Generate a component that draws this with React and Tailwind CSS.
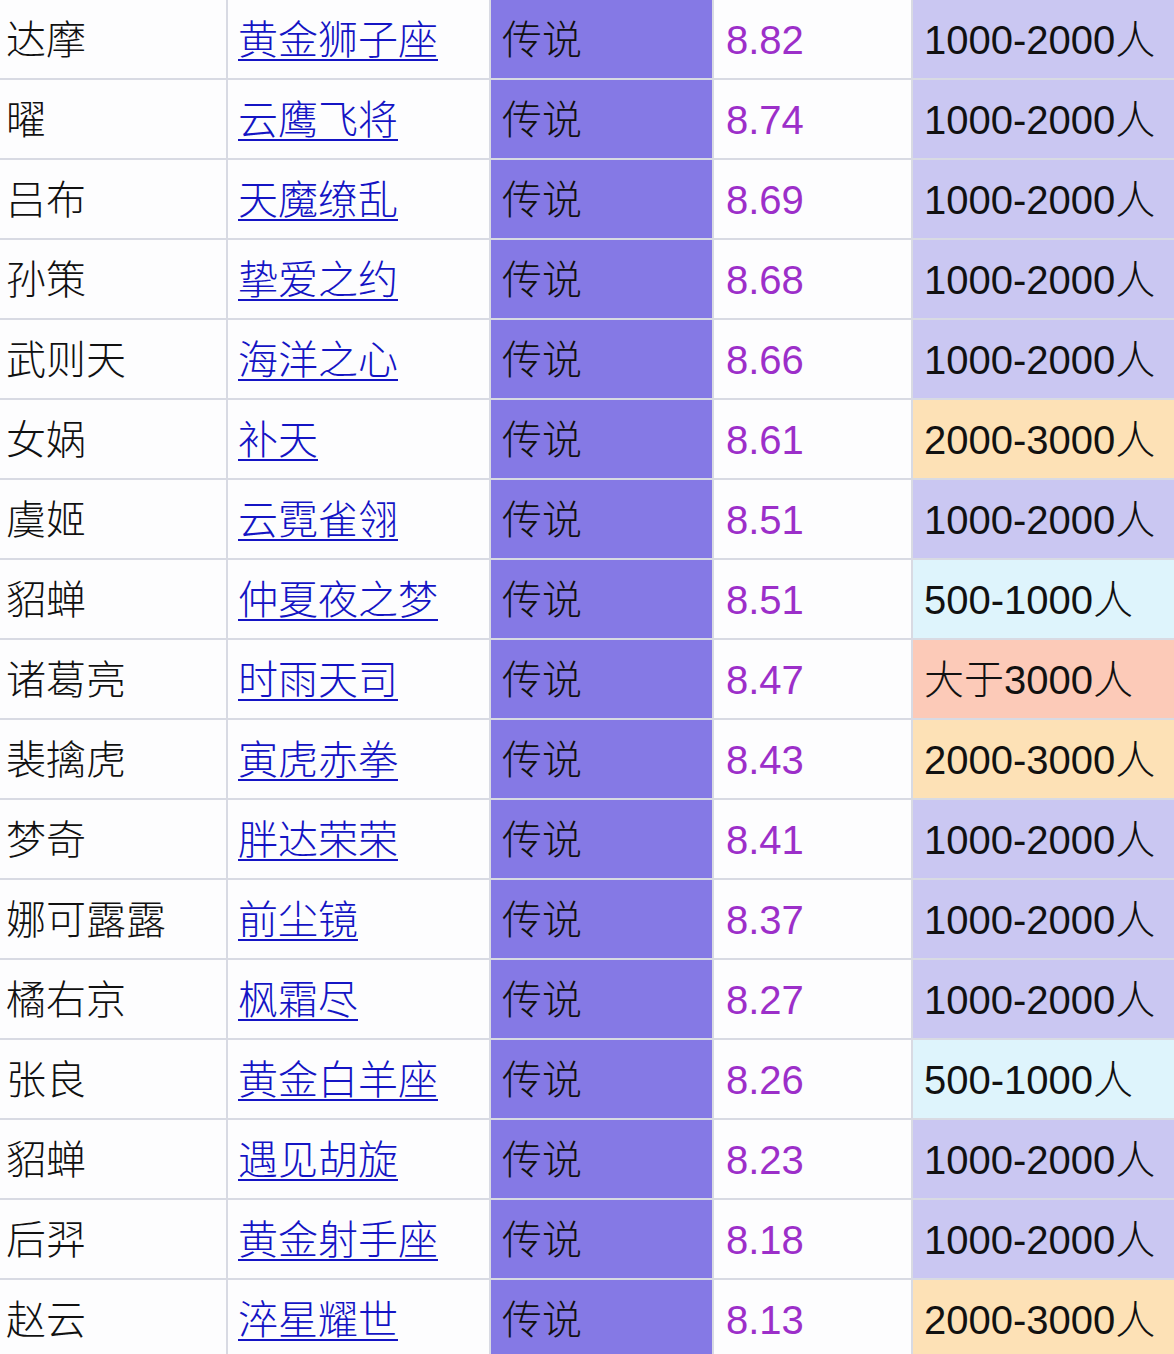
import React from "react";

const rows = [
  ["达摩", "黄金狮子座", "8.82", "1000-2000人", "p"],
  ["曜", "云鹰飞将", "8.74", "1000-2000人", "p"],
  ["吕布", "天魔缭乱", "8.69", "1000-2000人", "p"],
  ["孙策", "挚爱之约", "8.68", "1000-2000人", "p"],
  ["武则天", "海洋之心", "8.66", "1000-2000人", "p"],
  ["女娲", "补天", "8.61", "2000-3000人", "o"],
  ["虞姬", "云霓雀翎", "8.51", "1000-2000人", "p"],
  ["貂蝉", "仲夏夜之梦", "8.51", "500-1000人", "b"],
  ["诸葛亮", "时雨天司", "8.47", "大于3000人", "r"],
  ["裴擒虎", "寅虎赤拳", "8.43", "2000-3000人", "o"],
  ["梦奇", "胖达荣荣", "8.41", "1000-2000人", "p"],
  ["娜可露露", "前尘镜", "8.37", "1000-2000人", "p"],
  ["橘右京", "枫霜尽", "8.27", "1000-2000人", "p"],
  ["张良", "黄金白羊座", "8.26", "500-1000人", "b"],
  ["貂蝉", "遇见胡旋", "8.23", "1000-2000人", "p"],
  ["后羿", "黄金射手座", "8.18", "1000-2000人", "p"],
  ["赵云", "淬星耀世", "8.13", "2000-3000人", "o"],
];

const bgMap = {
  p: "bg-[#cac7f2]",
  o: "bg-[#fde1b6]",
  b: "bg-[#def4fc]",
  r: "bg-[#fccab8]",
};

const font = "font-['Liberation_Sans','Noto_Sans_CJK_SC',sans-serif] font-light";

export default function App() {
  return (
    <div className={`w-[1174px] h-[1354px] overflow-hidden bg-white ${font}`}>
      <div className="grid grid-cols-[226px_261px_221px_197px_1fr] auto-rows-[78px] gap-[2px] bg-[#d8dae3]">
        {rows.map(([name, skin, score, count, c], i) => (
          <React.Fragment key={i}>
            <div className="bg-[#fdfdfe] flex items-center pl-[6px] pt-[2px] text-[40px] text-[#111111] leading-none">
              {name}
            </div>
            <div className="bg-[#fdfdfe] flex items-center pl-[10px] pt-[2px] text-[40px] leading-none">
              <span className="text-[#1414c4] underline decoration-[2px] underline-offset-[5px]">
                {skin}
              </span>
            </div>
            <div className="bg-[#8579e5] flex items-center pl-[11px] pt-[2px] text-[40px] text-[#111111] leading-none">
              传说
            </div>
            <div className="bg-[#fdfdfe] flex items-center pl-[12px] pt-[2px] text-[40px] text-[#9c2fc9] leading-none">
              {score}
            </div>
            <div className={`${bgMap[c]} flex items-center pl-[11px] pt-[2px] text-[40px] text-[#111111] leading-none`}>
              {count}
            </div>
          </React.Fragment>
        ))}
      </div>
    </div>
  );
}
